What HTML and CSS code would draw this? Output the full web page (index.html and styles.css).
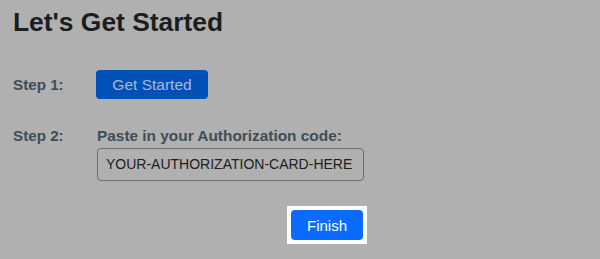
FILE: index.html
```html
<!DOCTYPE html>
<html>
<head>
<meta charset="utf-8">
<link rel="stylesheet" href="styles.css">
</head>
<body>
<div class="page">
  <h1 class="title">Let's Get Started</h1>
  <div class="step step1">
    <div class="step-label">Step 1:</div>
    <div class="step-body">
      <button class="btn-start">Get Started</button>
    </div>
  </div>
  <div class="step step2">
    <div class="step-label">Step 2:</div>
    <div class="step-body">
      <div class="field-label">Paste in your Authorization code:</div>
      <div class="code-input">YOUR-AUTHORIZATION-CARD-HERE</div>
    </div>
  </div>
  <div class="actions">
    <div class="spotlight">
      <button class="btn-finish">Finish</button>
    </div>
  </div>
</div>
</body>
</html>
```
FILE: styles.css
```css
html, body {
  margin: 0;
  padding: 0;
  background: #b0b0b0;
}
body {
  font-family: "Liberation Sans", Arial, sans-serif;
  width: 600px;
  height: 259px;
  overflow: hidden;
}
.page {
  padding: 7px 13px 0 13px;
}
.title {
  margin: 0;
  font-size: 26.4px;
  font-weight: bold;
  color: #1b1e21;
  line-height: 30px;
}
.step {
  display: grid;
  grid-template-columns: 83px auto;
  align-items: start;
}
.step1 {
  margin-top: 33px;
  align-items: center;
}
.step2 {
  margin-top: 28px;
}
.step-label {
  font-size: 15.2px;
  font-weight: bold;
  color: #3f4d59;
  line-height: 18px;
}
.btn-start {
  display: block;
  width: 112px;
  height: 29px;
  border: none;
  border-radius: 4px;
  background: #0050b8;
  color: #a9b9d6;
  font-family: "Liberation Sans", Arial, sans-serif;
  font-size: 15.5px;
  padding: 0;
}
.field-label {
  font-size: 15.4px;
  font-weight: bold;
  color: #3f4d59;
  line-height: 18px;
  padding-left: 1px;
}
.code-input {
  margin-top: 3px;
  margin-left: 1px;
  width: 267px;
  height: 33px;
  border: 1px solid #6e6e6e;
  border-radius: 4px;
  box-sizing: border-box;
  font-size: 14px;
  color: #202020;
  line-height: 31px;
  padding-left: 8px;
}
.actions {
  display: flex;
  margin-top: 25px;
  padding-left: 274px;
}
.spotlight {
  background: #ffffff;
  padding: 4px;
}
.btn-finish {
  display: block;
  width: 72px;
  height: 30px;
  border: none;
  border-radius: 4px;
  background: #0a6cff;
  color: #ffffff;
  font-family: "Liberation Sans", Arial, sans-serif;
  font-size: 15px;
  padding: 0;
}
```
